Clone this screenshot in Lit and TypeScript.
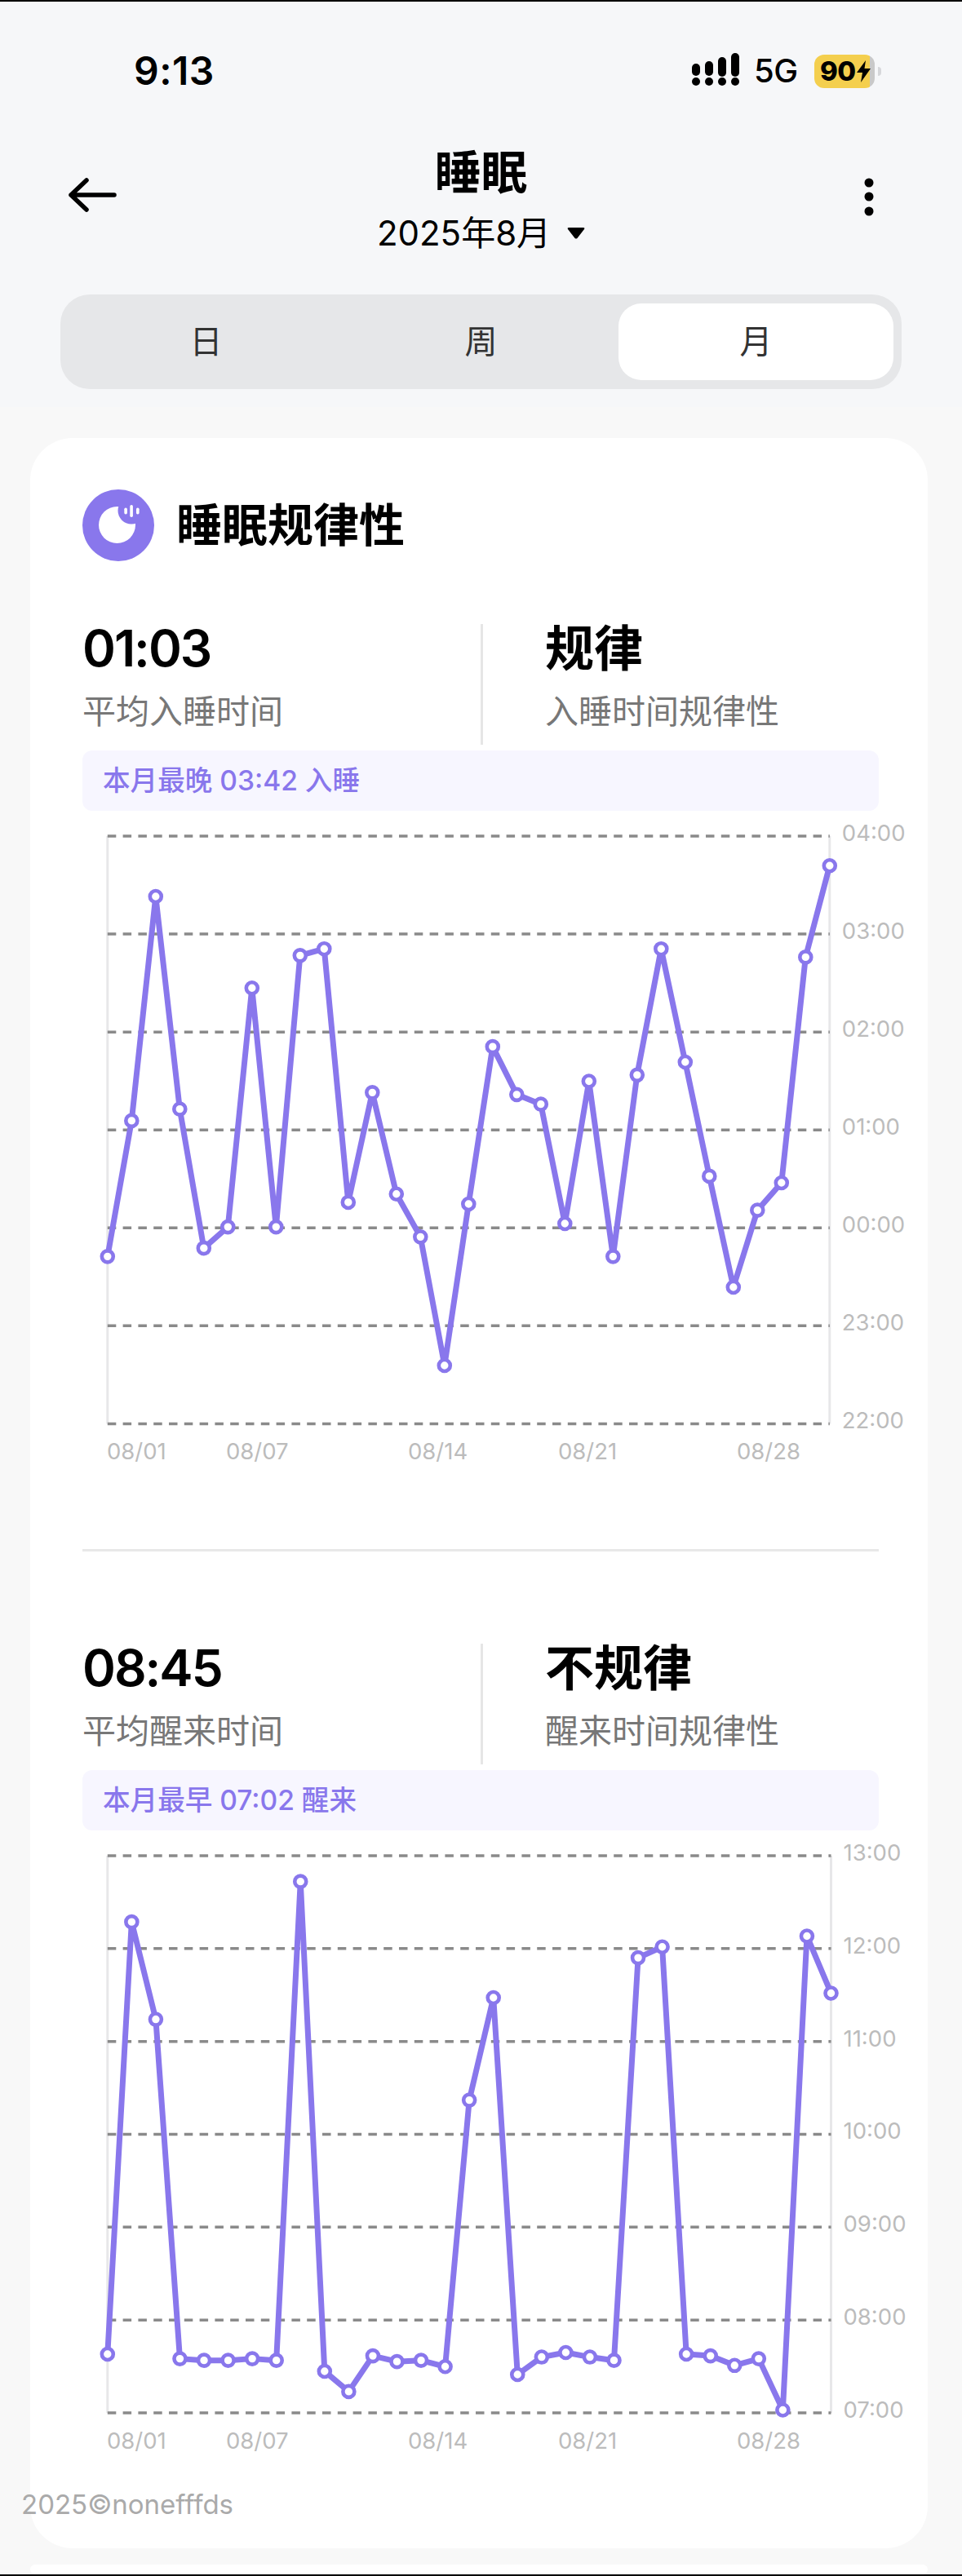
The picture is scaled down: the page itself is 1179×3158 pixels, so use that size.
import { LitElement, html, css, svg } from "lit";
import { customElement, property } from "lit/decorators.js";

const SANS = css`Inter, "Noto Sans CJK SC", sans-serif`;

interface AxisTick {
  x: number;
  text: string;
}

/* Hours above the bottom of each chart's axis, one value per day of the month. */
const BEDTIME = [
  1.708, 3.094, 5.384, 3.213, 1.793, 2.01, 4.449, 2.01, 4.781, 4.849, 2.261, 3.382, 2.346, 1.908, 0.595, 2.244,
  3.85, 3.361, 3.263, 2.044, 3.497, 1.708, 3.561, 4.849, 3.693, 2.528, 1.394, 2.18, 2.46, 4.764, 5.698,
];
const WAKE = [
  0.632, 5.287, 4.238, 0.583, 0.565, 0.565, 0.583, 0.565, 5.722, 0.448, 0.229, 0.614, 0.552, 0.565, 0.498, 3.368,
  4.471, 0.413, 0.601, 0.65, 0.601, 0.565, 4.901, 5.018, 0.632, 0.614, 0.511, 0.583, 0.031, 5.135, 4.52,
];

@customElement("trend-chart")
class TrendChart extends LitElement {
  static styles = css`
    :host {
      display: block;
    }
    svg {
      display: block;
      overflow: visible;
    }
    .frame {
      stroke: #e7e7e9;
      stroke-width: 3;
    }
    .grid {
      stroke: #8a8a8a;
      stroke-width: 3.5;
      stroke-dasharray: 10.5 8.3;
    }
    .trace {
      fill: none;
      stroke: #8977ec;
      stroke-width: 7;
      stroke-linejoin: round;
    }
    .dot {
      fill: #fff;
      stroke: #8977ec;
      stroke-width: 4.6;
    }
    text {
      font-family: ${SANS};
      font-size: 27.5px;
      fill: #bcbcbc;
    }
  `;

  @property({ type: Array }) values: number[] = [];
  @property({ type: Array }) hours: string[] = [];
  @property({ type: Array }) ticks: AxisTick[] = [];
  @property({ type: Number }) step = 120;
  @property({ type: Number }) plotWidth = 885;
  @property({ type: Number }) viewHeight = 807;

  render() {
    const left = 94.8;
    const top = 31;
    const bottom = top + this.step * 6;
    const right = left + this.plotWidth;
    const dx = this.plotWidth / (this.values.length - 1);
    const points = this.values.map((v, i) => [left + i * dx, bottom - v * this.step]);
    return html`<svg width="1100" height=${this.viewHeight} viewBox="0 0 1100 ${this.viewHeight}">
      ${svg`
        <line class="frame" x1=${left} x2=${left} y1=${top} y2=${bottom}></line>
        <line class="frame" x1=${right} x2=${right} y1=${top} y2=${bottom}></line>
        ${this.hours.map((label, i) => {
          const y = top + i * this.step;
          return svg`
            <line class="grid" x1=${left} x2=${right} y1=${y} y2=${y}></line>
            <text x=${right + 15} y=${y + 6}>${label}</text>`;
        })}
        <polyline class="trace" points=${points.map((p) => p.join(",")).join(" ")}></polyline>
        ${points.map((p) => svg`<circle class="dot" cx=${p[0]} cy=${p[1]} r="7"></circle>`)}
        ${this.ticks.map((t) => svg`<text x=${t.x} y=${bottom + 44}>${t.text}</text>`)}
      `}
    </svg>`;
  }
}

const DAY_TICKS: AxisTick[] = [
  { x: 94, text: "08/01" },
  { x: 240, text: "08/07" },
  { x: 463, text: "08/14" },
  { x: 647, text: "08/21" },
  { x: 866, text: "08/28" },
];

@customElement("app-root")
class AppRoot extends LitElement {
  static styles = css`
    :host {
      display: flex;
      flex-direction: column;
      box-sizing: border-box;
      position: relative;
      width: 1179px;
      height: 3158px;
      overflow: hidden;
      background: #f8f8f8;
      border-top: 2px solid #000;
      border-bottom: 2px solid #000;
      font-family: ${SANS};
      color: #000;
    }
    .top {
      background: #f6f7f9;
      padding-bottom: 22px;
    }
    .status {
      height: 170px;
      box-sizing: border-box;
      padding: 62px 0 0 164px;
      display: flex;
      align-items: flex-start;
    }
    .clock {
      font-size: 48px;
      line-height: 46px;
      font-weight: 600;
      letter-spacing: 0.5px;
      width: 684px;
    }
    .signal {
      display: block;
      flex: none;
    }
    .net {
      font-size: 40px;
      line-height: 46px;
      font-weight: 500;
      width: 74px;
      margin-left: 18px;
      letter-spacing: -0.5px;
    }
    .battery {
      box-sizing: border-box;
      width: 74px;
      height: 41px;
      margin-top: 3px;
      border-radius: 12px;
      background: linear-gradient(90deg, #f4cf4e 68px, #c9c9c9 68px);
      display: flex;
      align-items: center;
      padding-left: 7px;
      font-size: 33px;
      font-weight: 800;
      line-height: 41px;
      letter-spacing: -0.5px;
    }
    .bolt {
      display: block;
      margin-left: 1px;
    }
    .nub {
      width: 4px;
      height: 11px;
      margin: 18px 0 0 4px;
      background: #d6d7da;
      border-radius: 0 5px 5px 0;
    }
    .nav {
      display: grid;
      grid-template-columns: 1fr auto 1fr;
      align-items: start;
      padding: 12px 84px 0;
      height: 189px;
      box-sizing: border-box;
    }
    .back {
      display: block;
      margin-top: 33px;
    }
    .more {
      display: block;
      justify-self: end;
      margin: 34px 24px 0 0;
    }
    .heading {
      display: flex;
      flex-direction: column;
      align-items: center;
    }
    .title {
      font-size: 57px;
      line-height: 56px;
      font-weight: 700;
    }
    .period {
      display: flex;
      align-items: center;
      gap: 20px;
      margin-top: 22px;
      font-size: 42px;
      line-height: 48px;
    }
    .caret {
      display: block;
    }
    .tabs {
      display: grid;
      grid-template-columns: repeat(3, 337px);
      margin: 0 74px;
      padding: 11px 10px;
      background: #e6e7e9;
      border-radius: 36px;
    }
    .tab {
      height: 94px;
      line-height: 94px;
      text-align: center;
      font-size: 40px;
      color: #333;
      border-radius: 28px;
    }
    .tab.on {
      background: #fff;
    }
    .card {
      width: 1100px;
      margin: 38px 0 0 37px;
      padding: 63px 0 100px;
      background: #fff;
      border-radius: 52px;
    }
    .head {
      display: flex;
      align-items: center;
      gap: 27px;
      padding-left: 64px;
      margin-bottom: 77px;
    }
    .head svg {
      display: block;
    }
    .head span {
      font-size: 56px;
      line-height: 88px;
      font-weight: 700;
    }
    .stats {
      display: grid;
      grid-template-columns: 488px 1fr;
      height: 148px;
      margin-left: 64px;
    }
    .stat + .stat {
      border-left: 3px solid #e6e6e6;
      padding-left: 76px;
    }
    .value {
      font-size: 62px;
      line-height: 60px;
      font-weight: 600;
      letter-spacing: -2px;
    }
    .value.word {
      font-size: 60px;
      font-weight: 700;
      letter-spacing: 0;
    }
    .label {
      margin-top: 25px;
      font-size: 41px;
      line-height: 44px;
      color: #777;
    }
    .note {
      height: 74px;
      margin: 7px 60px 0 64px;
      padding-left: 25px;
      background: #f7f6ff;
      border-radius: 12px;
      font-size: 33.6px;
      font-weight: 500;
      line-height: 74px;
      color: #8977ec;
    }
    hr {
      height: 3px;
      margin: 98px 60px 113px 64px;
      border: 0;
      background: #e8e8e8;
    }
    .next {
      width: 1100px;
      height: 80px;
      margin: 20px 0 0 37px;
      background: #fff;
      border-radius: 52px;
    }
    .mark {
      position: absolute;
      left: 26px;
      top: 3048px;
      font-size: 33px;
      line-height: 40px;
      color: #aaa;
    }
  `;

  private stat(value: string, word: boolean, label: string) {
    return html`<div class="stat">
      <div class="value ${word ? "word" : ""}">${value}</div>
      <div class="label">${label}</div>
    </div>`;
  }

  render() {
    return html`
      <div class="top">
        <div class="status">
          <div class="clock">9:13</div>
          <svg class="signal" width="58" height="46" viewBox="0 0 58 46" fill="#000">
            <rect x="0" y="14" width="10" height="15" rx="5"></rect>
            <rect x="16" y="11" width="10" height="18" rx="5"></rect>
            <rect x="32" y="6" width="10" height="24" rx="5"></rect>
            <rect x="48" y="1" width="10" height="29" rx="5"></rect>
            <circle cx="5" cy="36" r="5"></circle>
            <circle cx="21" cy="36" r="5"></circle>
            <circle cx="37" cy="36" r="5"></circle>
            <circle cx="53" cy="36" r="5"></circle>
          </svg>
          <div class="net">5G</div>
          <div class="battery">
            <span>90</span>
            <svg class="bolt" width="17" height="27" viewBox="0 0 17 27" fill="#000">
              <path d="M11 0 L0 15 H7 L5 27 L17 10 H9.5 Z"></path>
            </svg>
          </div>
          <div class="nub"></div>
        </div>
        <div class="nav">
          <svg class="back" width="60" height="44" viewBox="0 0 60 44" fill="none" stroke="#000" stroke-width="5.5" stroke-linecap="round" stroke-linejoin="round">
            <path d="M3 22 H56 M22 4 L3 22 L22 40"></path>
          </svg>
          <div class="heading">
            <div class="title">睡眠</div>
            <div class="period">
              <span>2025年8月</span>
              <svg class="caret" width="22" height="14" viewBox="0 0 22 14" fill="#000">
                <path d="M2 0 H20 Q22 0 21 2 L12.5 13 Q11 14 9.5 13 L1 2 Q0 0 2 0 Z"></path>
              </svg>
            </div>
          </div>
          <svg class="more" width="12" height="48" viewBox="0 0 12 48" fill="#000">
            <circle cx="6" cy="6" r="5.5"></circle>
            <circle cx="6" cy="23" r="5.5"></circle>
            <circle cx="6" cy="41" r="5.5"></circle>
          </svg>
        </div>
        <div class="tabs">
          <div class="tab">日</div>
          <div class="tab">周</div>
          <div class="tab on">月</div>
        </div>
      </div>

      <section class="card">
        <div class="head">
          <svg width="88" height="88" viewBox="0 0 88 88">
            <circle cx="44" cy="44" r="44" fill="#8977ec"></circle>
            <circle cx="42.5" cy="43.5" r="22.5" fill="#fff"></circle>
            <circle cx="60" cy="26" r="16.5" fill="#8977ec"></circle>
            <g fill="#fff">
              <rect x="51.3" y="22.5" width="3.6" height="8" rx="1.8"></rect>
              <rect x="58.3" y="19" width="3.6" height="15" rx="1.8"></rect>
              <rect x="66" y="22.5" width="3.6" height="8" rx="1.8"></rect>
            </g>
          </svg>
          <span>睡眠规律性</span>
        </div>

        <div class="stats">
          ${this.stat("01:03", false, "平均入睡时间")}
          ${this.stat("规律", true, "入睡时间规律性")}
        </div>
        <div class="note">本月最晚 03:42 入睡</div>
        <trend-chart
          .values=${BEDTIME}
          .hours=${["04:00", "03:00", "02:00", "01:00", "00:00", "23:00", "22:00"]}
          .ticks=${DAY_TICKS}
          .step=${120.07}
          .plotWidth=${885}
          .viewHeight=${807}
        ></trend-chart>

        <hr />

        <div class="stats">
          ${this.stat("08:45", false, "平均醒来时间")}
          ${this.stat("不规律", true, "醒来时间规律性")}
        </div>
        <div class="note">本月最早 07:02 醒来</div>
        <trend-chart
          .values=${WAKE}
          .hours=${["13:00", "12:00", "11:00", "10:00", "09:00", "08:00", "07:00"]}
          .ticks=${DAY_TICKS}
          .step=${113.83}
          .plotWidth=${886.7}
          .viewHeight=${780}
        ></trend-chart>
      </section>
      <div class="next"></div>
      <div class="mark">2025©nonefffds</div>
    `;
  }
}
